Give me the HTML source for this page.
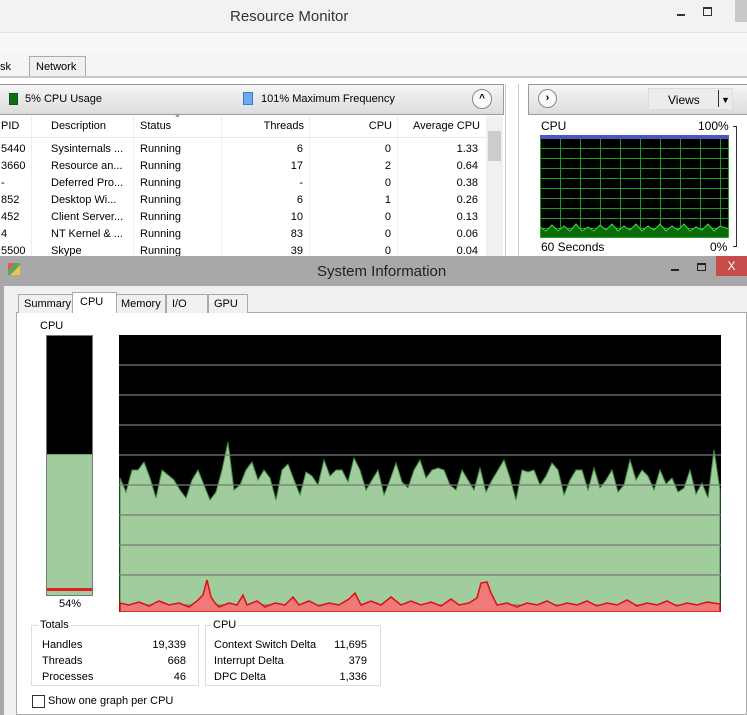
<!DOCTYPE html>
<html><head><meta charset="utf-8"><style>
*{margin:0;padding:0;box-sizing:border-box}
body{width:747px;height:715px;overflow:hidden;background:#fff;font-family:"Liberation Sans","DejaVu Sans",sans-serif;font-size:11px;color:#000;position:relative}
.a{position:absolute}
.r{text-align:right}
</style></head><body>
<div class="a" style="left:0;top:0;width:747px;height:33px;background:#f2f2f2;border-bottom:1px solid #e2e2e2"></div>
<div class="a" style="left:230px;top:8px;font-size:15px;color:#333">Resource Monitor</div>
<div class="a" style="left:677px;top:14px;width:8px;height:2px;background:#333"></div>
<div class="a" style="left:703px;top:7px;width:9px;height:9px;border:1px solid #333;border-top-width:2px"></div>
<div class="a" style="left:735px;top:0;width:12px;height:22px;background:#c8c8c8"></div>
<div class="a" style="left:0;top:33px;width:747px;height:20px;background:#f7f7f7"></div>
<div class="a" style="left:0;top:53px;width:747px;height:25px;background:#f5f5f5"></div>
<div class="a" style="left:0;top:61px">sk</div>
<div class="a" style="left:29px;top:56px;width:57px;height:21px;border:1px solid #aaa;border-bottom:none;padding:4px 0 0 6px;background:#f0f0f0">Network</div>
<div class="a" style="left:0;top:76px;width:747px;height:2px;background:#c8c8c8"></div>
<div class="a" style="left:0;top:84px;width:504px;height:31px;background:linear-gradient(#f6f6f6,#dcdcdc);border:1px solid #999;border-left:none"></div>
<div class="a" style="left:9px;top:93px;width:9px;height:12px;background:#107010;border:1px solid #053"></div>
<div class="a" style="left:25px;top:93px">5% CPU Usage</div>
<div class="a" style="left:243px;top:92px;width:10px;height:13px;background:#6aaaf0;border:1px solid #3a7ad0"></div>
<div class="a" style="left:261px;top:93px">101% Maximum Frequency</div>
<div class="a" style="left:472px;top:89px;width:20px;height:20px;border:1px solid #888;border-radius:50%;background:#fafafa;text-align:center;font-size:10px;line-height:18px;font-weight:bold">^</div>
<div class="a" style="left:0;top:115px;width:486px;height:23px;border-bottom:1px solid #e8e8e8"></div>
<div class="a" style="left:1px;top:120px">PID</div>
<div class="a" style="left:51px;top:120px">Description</div>
<div class="a" style="left:140px;top:120px">Status</div>
<div class="a" style="left:174px;top:112px;font-size:7px;color:#7aa">▲</div>
<div class="a r" style="left:220px;top:120px;width:84px">Threads</div>
<div class="a r" style="left:320px;top:120px;width:72px">CPU</div>
<div class="a r" style="left:395px;top:120px;width:85px">Average CPU</div>
<div class="a" style="left:31px;top:116px;width:1px;height:140px;background:#eee"></div>
<div class="a" style="left:133px;top:116px;width:1px;height:140px;background:#eee"></div>
<div class="a" style="left:221px;top:116px;width:1px;height:140px;background:#eee"></div>
<div class="a" style="left:309px;top:116px;width:1px;height:140px;background:#eee"></div>
<div class="a" style="left:397px;top:116px;width:1px;height:140px;background:#eee"></div>
<div class="a" style="left:486px;top:116px;width:17px;height:140px;background:#f0f0f0"></div>
<div class="a" style="left:488px;top:131px;width:13px;height:30px;background:#cdcdcd"></div>
<div class="a" style="left:505px;top:84px;width:1px;height:172px;background:#ccc"></div>
<div class="a" style="left:518px;top:84px;width:1px;height:172px;background:#ccc"></div>
<div class="a" style="left:1px;top:141px;line-height:17px">5440<br>3660<br>-<br>852<br>452<br>4<br>5500</div>
<div class="a" style="left:51px;top:141px;line-height:17px">Sysinternals ...<br>Resource an...<br>Deferred Pro...<br>Desktop Wi...<br>Client Server...<br>NT Kernel &amp; ...<br>Skype</div>
<div class="a" style="left:140px;top:141px;line-height:17px">Running<br>Running<br>Running<br>Running<br>Running<br>Running<br>Running</div>
<div class="a r" style="left:250px;top:141px;width:53px;line-height:17px">6<br>17<br>-<br>6<br>10<br>83<br>39</div>
<div class="a r" style="left:330px;top:141px;width:61px;line-height:17px">0<br>2<br>0<br>1<br>0<br>0<br>0</div>
<div class="a r" style="left:420px;top:141px;width:58px;line-height:17px">1.33<br>0.64<br>0.38<br>0.26<br>0.13<br>0.06<br>0.04</div>
<div class="a" style="left:528px;top:84px;width:219px;height:31px;background:linear-gradient(#f6f6f6,#dcdcdc);border:1px solid #999;border-right:none"></div>
<div class="a" style="left:538px;top:89px;width:19px;height:19px;border:1px solid #888;border-radius:50%;background:#fafafa;text-align:center;font-size:11px;line-height:17px;font-weight:bold">›</div>
<div class="a" style="left:648px;top:88px;width:85px;height:22px;background:#ececec;border:1px solid #ddd;padding:4px 0 0 19px;font-size:12px">Views</div>
<div class="a" style="left:718px;top:90px;width:1px;height:17px;background:#333"></div>
<div class="a" style="left:721px;top:95px;font-size:9px">▼</div>
<div class="a" style="left:541px;top:119px;font-size:12px">CPU</div>
<div class="a" style="left:698px;top:119px;font-size:12px">100%</div>
<div class="a" style="left:541px;top:240px;font-size:12px">60 Seconds</div>
<div class="a" style="left:710px;top:240px;font-size:12px">0%</div>
<div class="a" style="left:733px;top:126px;width:4px;height:121px;border:1px solid #333;border-left:none"></div>
<svg class="a" style="left:540px;top:135px" width="189" height="103">
<rect width="189" height="103" fill="#000"/>
<rect width="189" height="4" fill="#4a58c0"/>
<g stroke="#1e9a1e" stroke-width="1">
<path d="M0.5 4V103M20.5 4V103M40.5 4V103M60.5 4V103M80.5 4V103M100.5 4V103M120.5 4V103M140.5 4V103M160.5 4V103M180.5 4V103M188.5 4V103M0 13.5H189M0 23.5H189M0 33.5H189M0 43.5H189M0 53.5H189M0 63.5H189M0 73.5H189M0 83.5H189M0 93.5H189M0 102.5H189"/></g>
<path d="M0 103V92L6 96L12 90L18 96L24 91L30 96L36 89L42 96L48 92L54 96L60 90L66 95L72 89L78 96L84 91L90 95L96 89L102 96L108 91L114 95L120 89L126 96L132 91L138 95L144 89L150 96L156 92L162 95L168 89L174 96L180 91L189 94V103Z" fill="#0a6a0a" stroke="#3cdc3c"/>
</svg>
<div class="a" style="left:0;top:256px;width:747px;height:459px;background:#a8a8a8"></div>
<div class="a" style="left:317px;top:263px;font-size:15px;color:#222">System Information</div>
<div class="a" style="left:8px;top:263px;width:12px;height:12px;background:linear-gradient(135deg,#e44 0 30%,#4a4 30% 60%,#fc3 60%);opacity:.8"></div>
<div class="a" style="left:671px;top:269px;width:8px;height:2px;background:#222"></div>
<div class="a" style="left:697px;top:263px;width:9px;height:8px;border:1px solid #222;border-top-width:2px"></div>
<div class="a" style="left:716px;top:256px;width:31px;height:20px;background:#c74c4c;color:#fff;text-align:center;font-size:12px;line-height:20px">X</div>
<div class="a" style="left:4px;top:286px;width:743px;height:429px;background:#f0f0f0"></div>
<div class="a" style="left:16px;top:312px;width:731px;height:403px;background:#fff;border:1px solid #aaa"></div>
<div class="a" style="left:18px;top:294px;width:55px;height:19px;border:1px solid #aaa;border-bottom:none;background:#f0f0f0;padding:3px 0 0 5px">Summary</div>
<div class="a" style="left:72px;top:292px;width:45px;height:21px;border:1px solid #aaa;border-bottom:none;background:#fff;padding:3px 0 0 7px">CPU</div>
<div class="a" style="left:116px;top:294px;width:50px;height:19px;border:1px solid #aaa;border-bottom:none;background:#f0f0f0;padding:3px 0 0 4px">Memory</div>
<div class="a" style="left:166px;top:294px;width:42px;height:19px;border:1px solid #aaa;border-bottom:none;background:#f0f0f0;padding:3px 0 0 5px">I/O</div>
<div class="a" style="left:208px;top:294px;width:40px;height:19px;border:1px solid #aaa;border-bottom:none;background:#f0f0f0;padding:3px 0 0 5px">GPU</div>
<div class="a" style="left:40px;top:320px">CPU</div>
<div class="a" style="left:46px;top:335px;width:47px;height:261px;background:#000;border:1px solid #777"></div>
<div class="a" style="left:47px;top:454px;width:45px;height:141px;background:#a0cc9e;border-top:1px solid #6a6"></div>
<div class="a" style="left:47px;top:588px;width:45px;height:3px;background:#e02020"></div>
<div class="a" style="left:59px;top:598px">54%</div>
<svg class="a" style="left:119px;top:335px" width="602" height="277">
<rect width="602" height="277" fill="#000"/>
<path d="M1 277V143L7 157L13 135L19 135L25 127L31 143L37 163L43 135L49 140L55 145L61 155L67 163L73 145L79 135L85 150L91 165L97 157L103 135L109 107L115 155L121 150L127 135L133 127L139 145L145 135L151 143L157 165L163 135L169 129L175 145L181 160L187 137L193 141L199 150L205 125L211 141L217 135L223 135L229 147L235 123L241 135L247 155L253 145L259 135L265 160L271 145L277 128L283 147L289 153L295 135L301 125L307 143L313 135L319 133L325 135L331 150L337 155L343 135L349 145L355 155L361 133L367 157L373 145L379 135L385 125L391 143L397 165L403 135L409 137L415 135L421 150L427 141L433 128L439 135L445 160L451 145L457 135L463 135L469 155L475 133L481 153L487 145L493 135L499 157L505 150L511 125L517 145L523 135L529 141L535 155L541 135L547 149L553 143L559 157L565 153L571 135L577 159L583 148L589 163L595 115L601 155V277Z" fill="#a0cc9e" stroke="#3f8f3f"/>
<g stroke="#7a7a7a" stroke-width="1.3"><path d="M0 30H602M0 60H602M0 90H602M0 120H602M0 150H602M0 180H602M0 210H602M0 240H602M0 270H602"/></g>
<path d="M1 277V268L10 270L20 267L30 271L40 266L50 270L60 268L70 272L78 266L84 260L88 245L92 262L96 268L100 272L110 268L118 270L124 260L128 270L138 266L146 272L156 268L166 270L174 262L180 270L190 266L200 271L210 268L220 270L230 264L236 258L242 270L252 266L262 270L272 262L282 270L292 266L302 270L312 267L322 271L332 264L340 270L350 268L358 263L362 248L368 247L372 258L378 270L388 268L398 272L408 268L418 270L428 266L438 271L448 268L458 270L468 266L478 271L488 268L498 270L508 265L518 271L528 268L538 270L548 266L558 271L568 268L578 270L588 267L601 269V277Z" fill="#f07a7a" stroke="#dd1010" stroke-width="1.5"/>
</svg>
<div class="a" style="left:31px;top:625px;width:168px;height:61px;border:1px solid #ddd"></div>
<div class="a" style="left:38px;top:619px;background:#fff;padding:0 2px">Totals</div>
<div class="a" style="left:42px;top:637px;line-height:16px">Handles<br>Threads<br>Processes</div>
<div class="a r" style="left:120px;top:637px;width:66px;line-height:16px">19,339<br>668<br>46</div>
<div class="a" style="left:205px;top:625px;width:176px;height:61px;border:1px solid #ddd"></div>
<div class="a" style="left:211px;top:619px;background:#fff;padding:0 2px">CPU</div>
<div class="a" style="left:214px;top:637px;line-height:16px">Context Switch Delta<br>Interrupt Delta<br>DPC Delta</div>
<div class="a r" style="left:320px;top:637px;width:47px;line-height:16px">11,695<br>379<br>1,336</div>
<div class="a" style="left:32px;top:695px;width:13px;height:13px;border:1px solid #333"></div>
<div class="a" style="left:48px;top:695px">Show one graph per CPU</div>
</body></html>
